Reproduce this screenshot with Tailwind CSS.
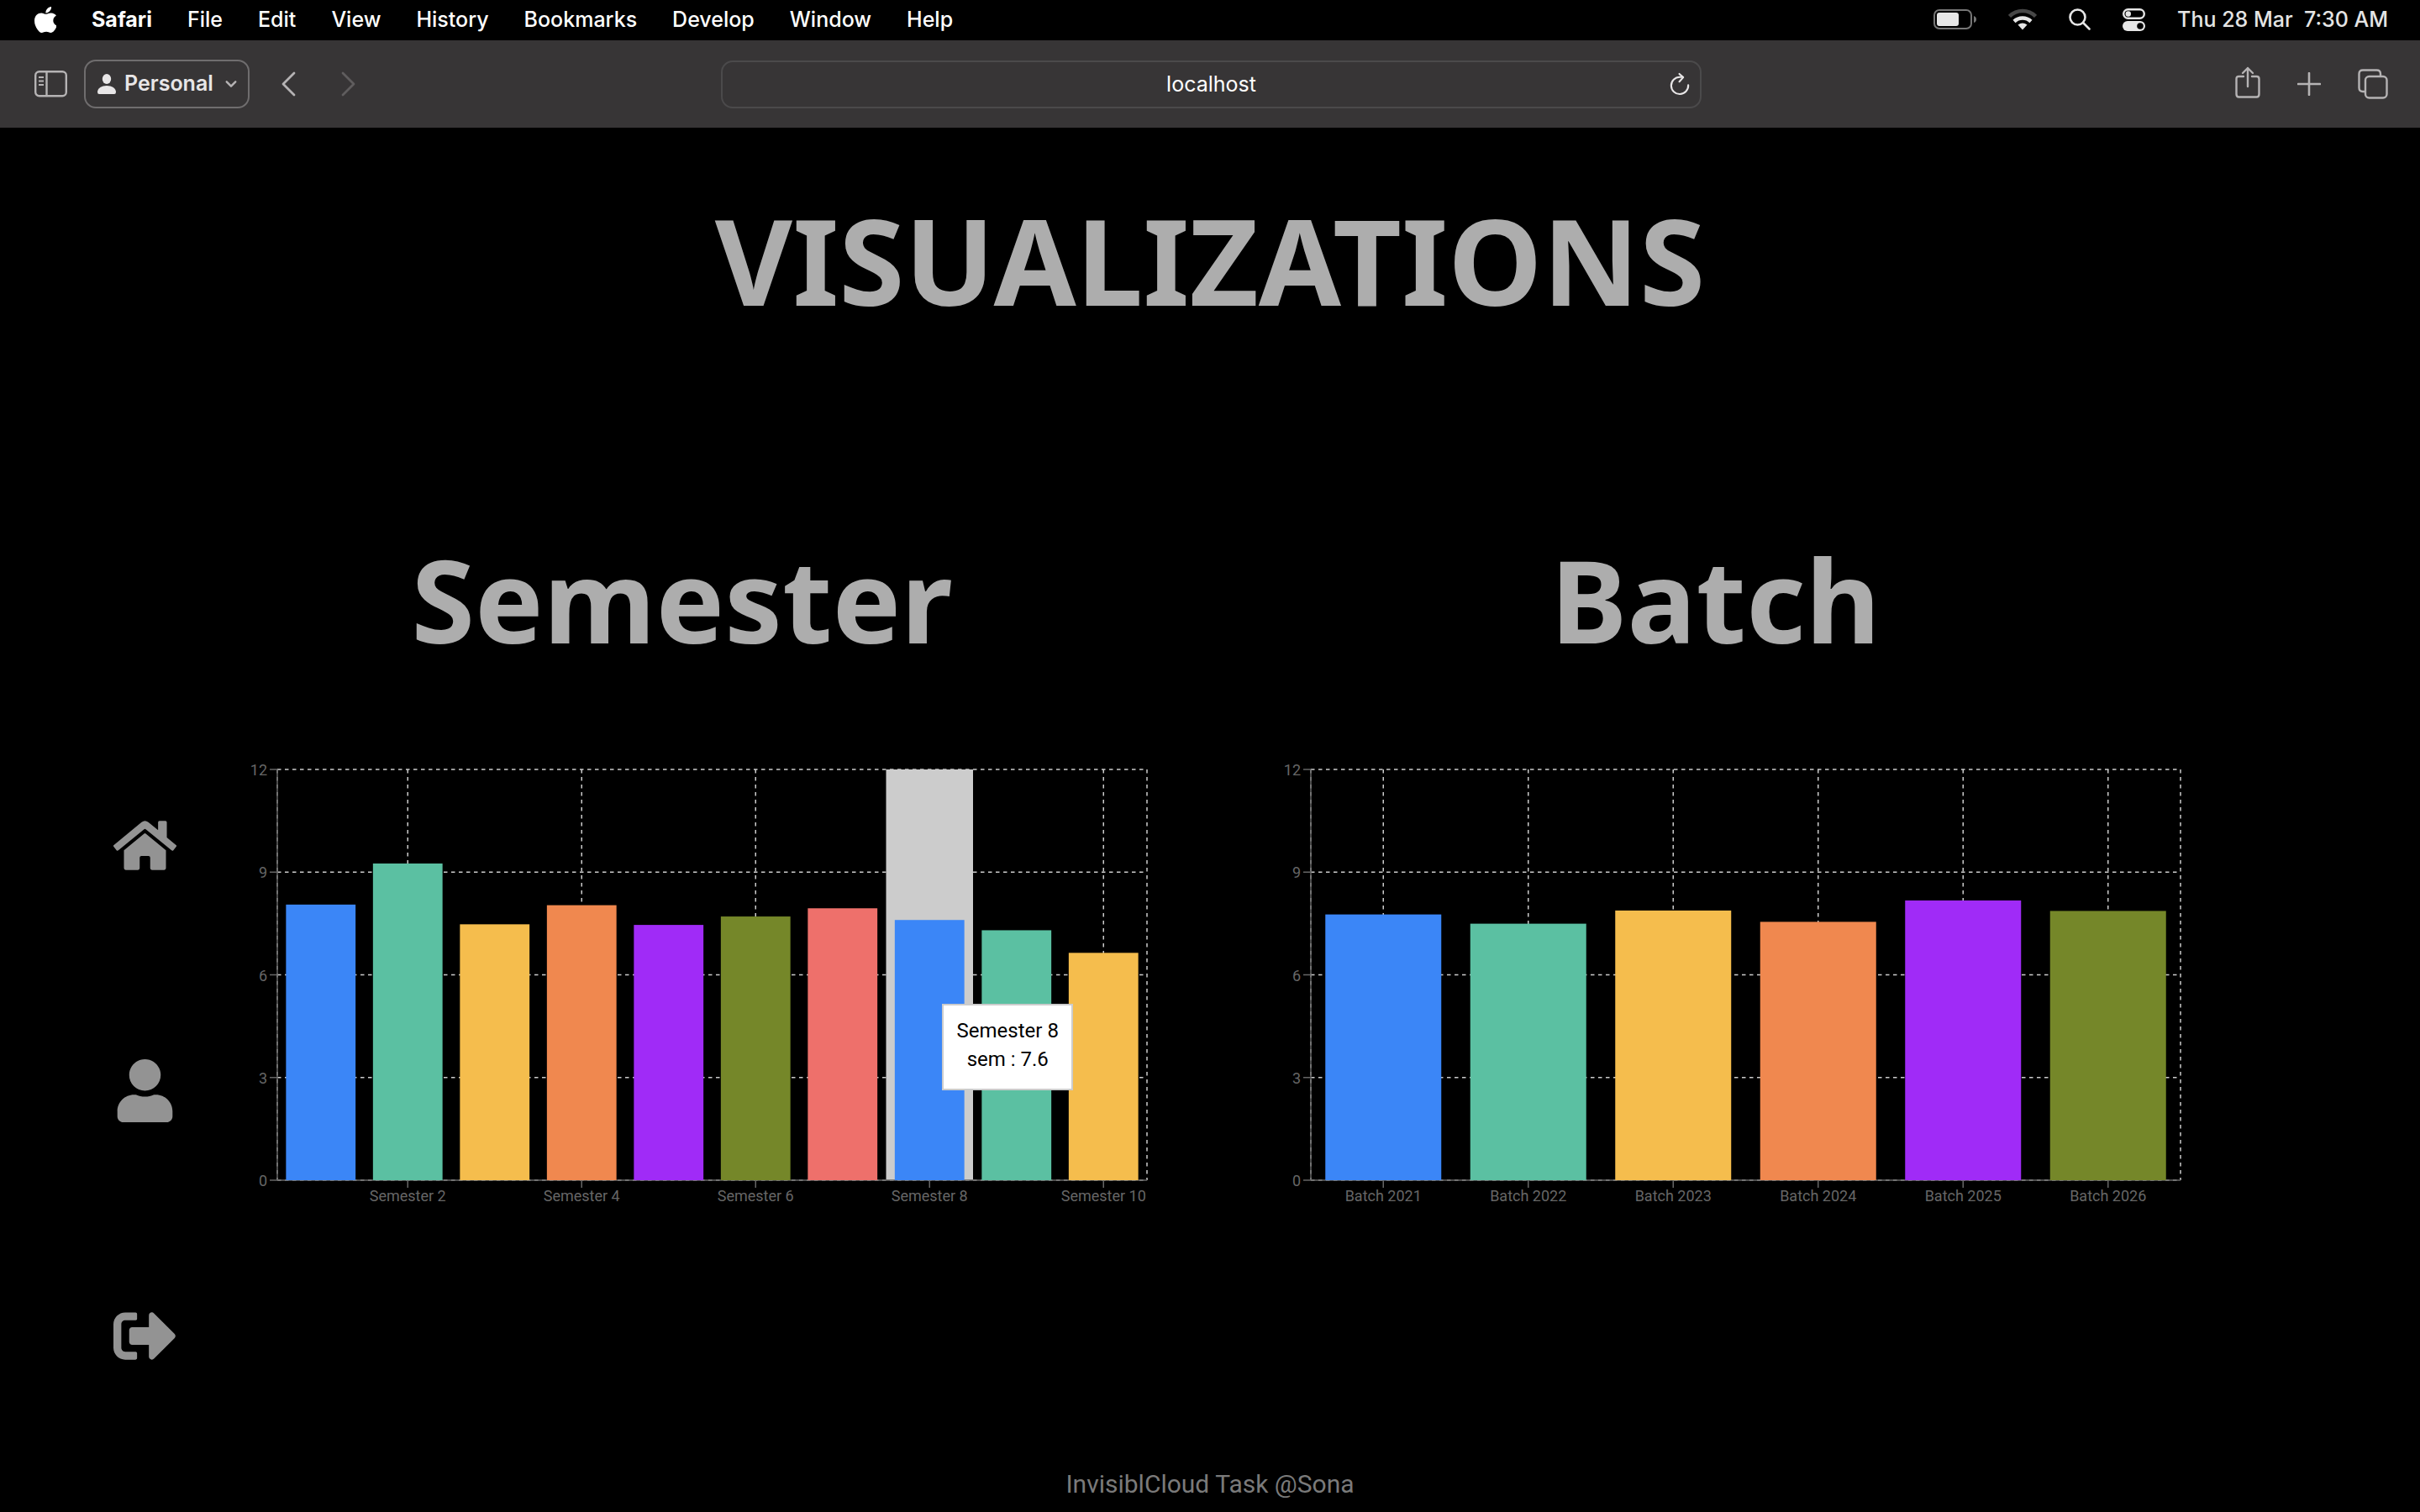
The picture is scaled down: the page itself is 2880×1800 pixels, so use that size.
<!DOCTYPE html>
<html lang="en">
<head>
<meta charset="utf-8">
<title>Visualizations</title>
<script src="https://cdn.jsdelivr.net/npm/@tailwindcss/browser@4"></script>
</head>
<body class="min-h-screen bg-black flex flex-col font-['Roboto',sans-serif]">

<!-- System menu bar -->
<header class="h-12 shrink-0 flex items-center justify-between pl-[41px] pr-[38px] pb-0.5 bg-black text-white text-[25px] leading-[30px] font-medium font-['Inter',sans-serif]">
  <nav class="flex items-center gap-[42px]" aria-label="Menu bar">
    <button aria-label="Apple"><svg class="w-[26px] h-[31px] fill-white" viewBox="4 32 366 448" preserveAspectRatio="none"><path d="M318.7 268.7c-.2-36.7 16.4-64.4 50-84.8-18.8-26.9-47.2-41.7-84.7-44.6-35.5-2.8-74.3 20.7-88.5 20.7-15 0-49.4-19.7-76.4-19.7C63.3 141.2 4 184.8 4 273.5q0 39.3 14.4 81.2c12.8 36.7 59 126.7 107.2 125.2 25.2-.6 43-17.9 75.8-17.9 31.8 0 48.3 17.9 76.4 17.9 48.6-.7 90.4-82.5 102.6-119.3-65.2-30.7-61.7-90-61.7-91.9zm-56.6-164.2c27.3-32.4 24.8-61.9 24-72.5-24.1 1.4-52 16.4-67.9 34.9-17.5 19.8-27.8 44.3-25.6 71.9 26.1 2 49.9-11.4 69.5-34.3z"/></svg></button>
    <button class="font-bold">Safari</button>
    <button>File</button>
    <button>Edit</button>
    <button>View</button>
    <button>History</button>
    <button>Bookmarks</button>
    <button>Develop</button>
    <button>Window</button>
    <button>Help</button>
  </nav>
  <div class="flex items-center gap-[38px] text-[#e4e4e4]">
    <svg class="w-[51px] h-6" viewBox="0 0 51 24" role="img" aria-label="Battery"><rect x="1" y="1" width="44" height="22" rx="6" fill="none" stroke="#767676" stroke-width="2"/><rect x="4" y="4" width="26" height="16" rx="3" fill="#e6e6e6"/><path d="M48 8q3 1 3 4t-3 4z" fill="#767676"/></svg>
    <svg class="w-[34px] h-[26px]" viewBox="0 0 34 26" role="img" aria-label="Wi-Fi" fill="none" stroke-width="4.500"><path d="M1.500 9.500a22 22 0 0 1 31 0" stroke="#474747"/><path d="M7 15.500a14.500 14.500 0 0 1 20 0" stroke="#e6e6e6"/><path d="M17 25.500l-5.500-6q5.500-4 11 0z" fill="#e6e6e6"/></svg>
    <button aria-label="Search"><svg class="w-[26px] h-[26px]" viewBox="0 0 26 26" fill="none" stroke="#e6e6e6" stroke-width="2.600" stroke-linecap="round"><circle cx="10.500" cy="10.500" r="9"/><path d="M17.500 17.500l7 7"/></svg></button>
    <button aria-label="Control Center"><svg class="w-[27px] h-[27px]" viewBox="0 0 27 27"><rect x="1.200" y="1.200" width="24.600" height="10.600" rx="5.300" fill="none" stroke="#e6e6e6" stroke-width="2.400"/><circle cx="6.800" cy="6.500" r="3.200" fill="#e6e6e6"/><rect y="15" width="27" height="12" rx="6" fill="#e6e6e6"/><circle cx="21" cy="21" r="3.800" fill="#000"/></svg></button>
    <time class="whitespace-pre">Thu 28 Mar  7:30 AM</time>
  </div>
</header>

<!-- Browser toolbar -->
<div class="h-[104px] shrink-0 flex items-center bg-[#373536] font-['Inter',sans-serif]">
  <div class="flex-1 flex items-center pl-[41px]">
    <button aria-label="Show sidebar"><svg class="w-[39px] h-8" viewBox="0 0 39 32" fill="none" stroke="#b5b3b4" stroke-width="2.400"><rect x="1.200" y="1.200" width="36.600" height="29" rx="4.500"/><path d="M14.500 1v29"/><path d="M5 8h6M5 12.500h6M5 17h6" stroke-width="2"/></svg></button>
    <button class="ml-5 w-[197px] h-[58px] flex items-center rounded-[14px] border-2 border-[#6f6d6e] pl-3.5 text-[25px] font-semibold text-[#e8e6e7]">
      <svg class="w-[22px] h-6 fill-[#e8e6e7]" viewBox="0 0 22 24"><ellipse cx="11" cy="6" rx="5.200" ry="6"/><path d="M0 21.500C0 17 5 14 11 14s11 3 11 7.500q0 2.500-2 2.500H2q-2 0-2-2.500z"/></svg>
      <span class="ml-2.5">Personal</span>
      <svg class="ml-3.5 w-3.5 h-2.5" viewBox="0 0 16 10" fill="none" stroke="#b5b3b4" stroke-width="2.800" stroke-linecap="round" stroke-linejoin="round"><path d="M2 2l6 6 6-6"/></svg>
    </button>
    <button class="ml-[37px]" aria-label="Back"><svg class="w-[18px] h-[30px]" viewBox="0 0 18 30" fill="none" stroke="#b5b3b4" stroke-width="2.800" stroke-linecap="round" stroke-linejoin="round"><path d="M16 2L3 15l13 13"/></svg></button>
    <button class="ml-[54px]" aria-label="Forward" disabled><svg class="w-[18px] h-[30px]" viewBox="0 0 18 30" fill="none" stroke="#5f5d5e" stroke-width="2.800" stroke-linecap="round" stroke-linejoin="round"><path d="M2 2l13 13L2 28"/></svg></button>
  </div>
  <div class="w-[40.5%] h-[57px] relative">
    <input type="text" value="localhost" aria-label="Address" class="w-full h-full rounded-[14px] border-2 border-[#4b4a4b] bg-transparent text-center text-[25px] text-white">
    <button class="absolute right-3.5 top-3.5" aria-label="Reload"><svg class="w-[24px] h-7" viewBox="0 0 26 28" fill="none" stroke="#e8e6e7" stroke-width="2.300" stroke-linecap="round" stroke-linejoin="round"><path d="M24 15.500A11 11 0 1 1 13 5h4"/><path d="M12.500 1l5 4.500-5 5.500"/></svg></button>
  </div>
  <div class="flex-1 flex items-center justify-end gap-[44px] pr-[38px]">
    <button class="-mt-1" aria-label="Share"><svg class="w-[30px] h-[38px]" viewBox="0 0 30 38" fill="none" stroke="#b5b3b4" stroke-width="2.400" stroke-linecap="round" stroke-linejoin="round"><path d="M10 12H4.500Q1.500 12 1.500 15v18q0 3.500 3 3.500h21q3 0 3-3.500V15q0-3-3-3H20"/><path d="M15 24V2M9 8l6-6 6 6"/></svg></button>
    <button aria-label="New tab"><svg class="w-7 h-7" viewBox="0 0 28 28" fill="none" stroke="#b5b3b4" stroke-width="2.600" stroke-linecap="round"><path d="M14 1v26M1 14h26"/></svg></button>
    <button aria-label="Tab overview"><svg class="w-9 h-9" viewBox="0 0 36 36" fill="none" stroke="#b5b3b4" stroke-width="2.400"><rect x="9" y="9" width="25.500" height="25.500" rx="4.500"/><path d="M9 27H6q-4.500 0-4.500-4.500V6Q1.500 1.500 6 1.500h16.500Q27 1.500 27 6v3"/></svg></button>
  </div>
</div>

<!-- Page -->
<main class="flex-1 flex flex-col pt-[61px]">
  <h1 class="text-center text-[#adadad] font-bold text-[142px] leading-[192px] font-['Noto_Sans',sans-serif]">VISUALIZATIONS</h1>

  <div class="flex mt-[212px]">
    <nav class="w-[210px] shrink-0 pl-[135px] pt-[352px] flex flex-col gap-[217px]" aria-label="Main">
      <a href="#home" aria-label="Home"><svg class="size-[75px] fill-[#939393]" viewBox="0 0 576 512"><path d="M280.370 148.260L96 300.110V464a16 16 0 0 0 16 16l112.060-.29a16 16 0 0 0 15.920-16V368a16 16 0 0 1 16-16h64a16 16 0 0 1 16 16v95.640a16 16 0 0 0 16 16.050L464 480a16 16 0 0 0 16-16V300L295.670 148.260a12.190 12.190 0 0 0-15.300 0zM571.600 251.470L488 182.560V44.050a12 12 0 0 0-12-12h-56a12 12 0 0 0-12 12v72.610L318.470 43a48 48 0 0 0-61 0L4.340 251.470a12 12 0 0 0-1.600 16.900l25.500 31A12 12 0 0 0 45.150 301l235.220-193.740a12.190 12.190 0 0 1 15.300 0L530.900 301a12 12 0 0 0 16.900-1.600l25.500-31a12 12 0 0 0-1.700-16.930z"/></svg></a>
      <a href="#profile" aria-label="Profile"><svg class="size-[75px] fill-[#939393]" viewBox="0 0 448 512"><path d="M224 256c70.700 0 128-57.300 128-128S294.700 0 224 0 96 57.300 96 128s57.300 128 128 128zm89.600 32h-16.700c-22.200 10.200-46.900 16-72.900 16s-50.600-5.800-72.900-16h-16.700C60.200 288 0 348.200 0 422.400V464c0 26.500 21.500 48 48 48h352c26.500 0 48-21.500 48-48v-41.600c0-74.200-60.200-134.400-134.400-134.400z"/></svg></a>
      <a href="#logout" aria-label="Log out"><svg class="size-[75px] fill-[#939393]" viewBox="0 0 512 512"><path d="M497 273L329 441c-15 15-41 4.500-41-17v-96H152c-13.300 0-24-10.700-24-24v-96c0-13.300 10.700-24 24-24h136V88c0-21.400 25.900-32 41-17l168 168c9.300 9.400 9.300 24.600 0 34zM192 436v-40c0-6.600-5.400-12-12-12H96c-17.700 0-32-14.300-32-32V160c0-17.700 14.300-32 32-32h84c6.600 0 12-5.400 12-12V76c0-6.600-5.400-12-12-12H96c-53 0-96 43-96 96v192c0 53 43 96 96 96h84c6.600 0 12-5.400 12-12z"/></svg></a>
    </nav>

    <div class="flex-1 grid grid-cols-2 gap-[195px] pl-[120px] pr-[285px]">
      <section>
        <h2 class="pr-[72px] text-center text-[#adadad] font-bold text-[137px] leading-[192px] font-['Noto_Sans',sans-serif]">Semester</h2>
        <div class="relative mt-[107px] h-[489px]">
          <svg class="w-full h-full overflow-visible text-[18px]" role="img" aria-label="Average per semester">
            <g stroke="#ccc" stroke-width="1.500" stroke-dasharray="4.500 4.500">
              <line x1="0" x2="100%" y1="0" y2="0"/><line x1="0" x2="100%" y1="25%" y2="25%"/><line x1="0" x2="100%" y1="50%" y2="50%"/><line x1="0" x2="100%" y1="75%" y2="75%"/><line x1="0" x2="100%" y1="100%" y2="100%"/>
              <line x1="0" x2="0" y1="0" y2="100%"/><line x1="15%" x2="15%" y1="0" y2="100%"/><line x1="35%" x2="35%" y1="0" y2="100%"/><line x1="55%" x2="55%" y1="0" y2="100%"/><line x1="75%" x2="75%" y1="0" y2="100%"/><line x1="95%" x2="95%" y1="0" y2="100%"/><line x1="100%" x2="100%" y1="0" y2="100%"/>
            </g>
            <rect x="70%" y="0" width="10%" height="100%" fill="#ccc"/>
            <g stroke="#666" stroke-width="1.500">
              <line x1="0" x2="100%" y1="100%" y2="100%"/><line x1="0" x2="0" y1="0" y2="100%"/>
              <line x1="-9" x2="0" y1="0" y2="0"/><line x1="-9" x2="0" y1="25%" y2="25%"/><line x1="-9" x2="0" y1="50%" y2="50%"/><line x1="-9" x2="0" y1="75%" y2="75%"/><line x1="-9" x2="0" y1="100%" y2="100%"/>
              <g transform="translate(0 9)"><line x1="15%" x2="15%" y1="98.160%" y2="100%"/><line x1="35%" x2="35%" y1="98.160%" y2="100%"/><line x1="55%" x2="55%" y1="98.160%" y2="100%"/><line x1="75%" x2="75%" y1="98.160%" y2="100%"/><line x1="95%" x2="95%" y1="98.160%" y2="100%"/></g>
            </g>
            <rect x="1%" y="32.900%" width="8%" height="67.100%" fill="#3b86f7"/>
            <rect x="11%" y="22.900%" width="8%" height="77.100%" fill="#5bc0a2"/>
            <rect x="21%" y="37.700%" width="8%" height="62.300%" fill="#f5bd4d"/>
            <rect x="31%" y="33.050%" width="8%" height="66.950%" fill="#f0884f"/>
            <rect x="41%" y="37.850%" width="8%" height="62.150%" fill="#a02bf7"/>
            <rect x="51%" y="35.800%" width="8%" height="64.200%" fill="#758729"/>
            <rect x="61%" y="33.800%" width="8%" height="66.200%" fill="#ee706b"/>
            <rect x="71%" y="36.650%" width="8%" height="63.350%" fill="#3b86f7"/>
            <rect x="81%" y="39.150%" width="8%" height="60.850%" fill="#5bc0a2"/>
            <rect x="91%" y="44.650%" width="8%" height="55.350%" fill="#f5bd4d"/>
            <g fill="#666" text-anchor="end">
              <text x="-12" y="0" dy="7">12</text><text x="-12" y="25%" dy="7">9</text><text x="-12" y="50%" dy="7">6</text><text x="-12" y="75%" dy="7">3</text><text x="-12" y="100%" dy="7">0</text>
            </g>
            <g fill="#666" text-anchor="middle">
              <text x="15%" y="100%" dy="25">Semester 2</text><text x="35%" y="100%" dy="25">Semester 4</text><text x="55%" y="100%" dy="25">Semester 6</text><text x="75%" y="100%" dy="25">Semester 8</text><text x="95%" y="100%" dy="25">Semester 10</text>
            </g>
          </svg>
          <div class="absolute left-[76.45%] top-[279px] w-[156px] h-[103px] pt-[13px] border-2 border-[#ccc] bg-white text-center text-black text-2xl leading-[34px]" role="tooltip">
            <p>Semester 8</p>
            <p>sem : 7.6</p>
          </div>
        </div>
      </section>

      <section>
        <h2 class="pr-[72px] text-center text-[#adadad] font-bold text-[137px] leading-[192px] font-['Noto_Sans',sans-serif]">Batch</h2>
        <div class="mt-[107px] h-[489px]">
          <svg class="w-full h-full overflow-visible text-[18px]" role="img" aria-label="Average per batch">
            <g stroke="#ccc" stroke-width="1.500" stroke-dasharray="4.500 4.500">
              <line x1="0" x2="100%" y1="0" y2="0"/><line x1="0" x2="100%" y1="25%" y2="25%"/><line x1="0" x2="100%" y1="50%" y2="50%"/><line x1="0" x2="100%" y1="75%" y2="75%"/><line x1="0" x2="100%" y1="100%" y2="100%"/>
              <line x1="0" x2="0" y1="0" y2="100%"/><line x1="8.333%" x2="8.333%" y1="0" y2="100%"/><line x1="25%" x2="25%" y1="0" y2="100%"/><line x1="41.667%" x2="41.667%" y1="0" y2="100%"/><line x1="58.333%" x2="58.333%" y1="0" y2="100%"/><line x1="75%" x2="75%" y1="0" y2="100%"/><line x1="91.667%" x2="91.667%" y1="0" y2="100%"/><line x1="100%" x2="100%" y1="0" y2="100%"/>
            </g>
            <g stroke="#666" stroke-width="1.500">
              <line x1="0" x2="100%" y1="100%" y2="100%"/><line x1="0" x2="0" y1="0" y2="100%"/>
              <line x1="-9" x2="0" y1="0" y2="0"/><line x1="-9" x2="0" y1="25%" y2="25%"/><line x1="-9" x2="0" y1="50%" y2="50%"/><line x1="-9" x2="0" y1="75%" y2="75%"/><line x1="-9" x2="0" y1="100%" y2="100%"/>
              <g transform="translate(0 9)"><line x1="8.333%" x2="8.333%" y1="98.160%" y2="100%"/><line x1="25%" x2="25%" y1="98.160%" y2="100%"/><line x1="41.667%" x2="41.667%" y1="98.160%" y2="100%"/><line x1="58.333%" x2="58.333%" y1="98.160%" y2="100%"/><line x1="75%" x2="75%" y1="98.160%" y2="100%"/><line x1="91.667%" x2="91.667%" y1="98.160%" y2="100%"/></g>
            </g>
            <rect x="1.667%" y="35.300%" width="13.333%" height="64.700%" fill="#3b86f7"/>
            <rect x="18.333%" y="37.550%" width="13.333%" height="62.450%" fill="#5bc0a2"/>
            <rect x="35%" y="34.350%" width="13.333%" height="65.650%" fill="#f5bd4d"/>
            <rect x="51.667%" y="37.100%" width="13.333%" height="62.900%" fill="#f0884f"/>
            <rect x="68.333%" y="31.900%" width="13.333%" height="68.100%" fill="#a02bf7"/>
            <rect x="85%" y="34.450%" width="13.333%" height="65.550%" fill="#758729"/>
            <g fill="#666" text-anchor="end">
              <text x="-12" y="0" dy="7">12</text><text x="-12" y="25%" dy="7">9</text><text x="-12" y="50%" dy="7">6</text><text x="-12" y="75%" dy="7">3</text><text x="-12" y="100%" dy="7">0</text>
            </g>
            <g fill="#666" text-anchor="middle">
              <text x="8.333%" y="100%" dy="25">Batch 2021</text><text x="25%" y="100%" dy="25">Batch 2022</text><text x="41.667%" y="100%" dy="25">Batch 2023</text><text x="58.333%" y="100%" dy="25">Batch 2024</text><text x="75%" y="100%" dy="25">Batch 2025</text><text x="91.667%" y="100%" dy="25">Batch 2026</text>
            </g>
          </svg>
        </div>
      </section>
    </div>
  </div>

  <footer class="mt-auto pb-[15px] text-center text-[#7a7a7a] text-[30px] leading-9">InvisiblCloud Task @Sona</footer>
</main>
</body>
</html>
